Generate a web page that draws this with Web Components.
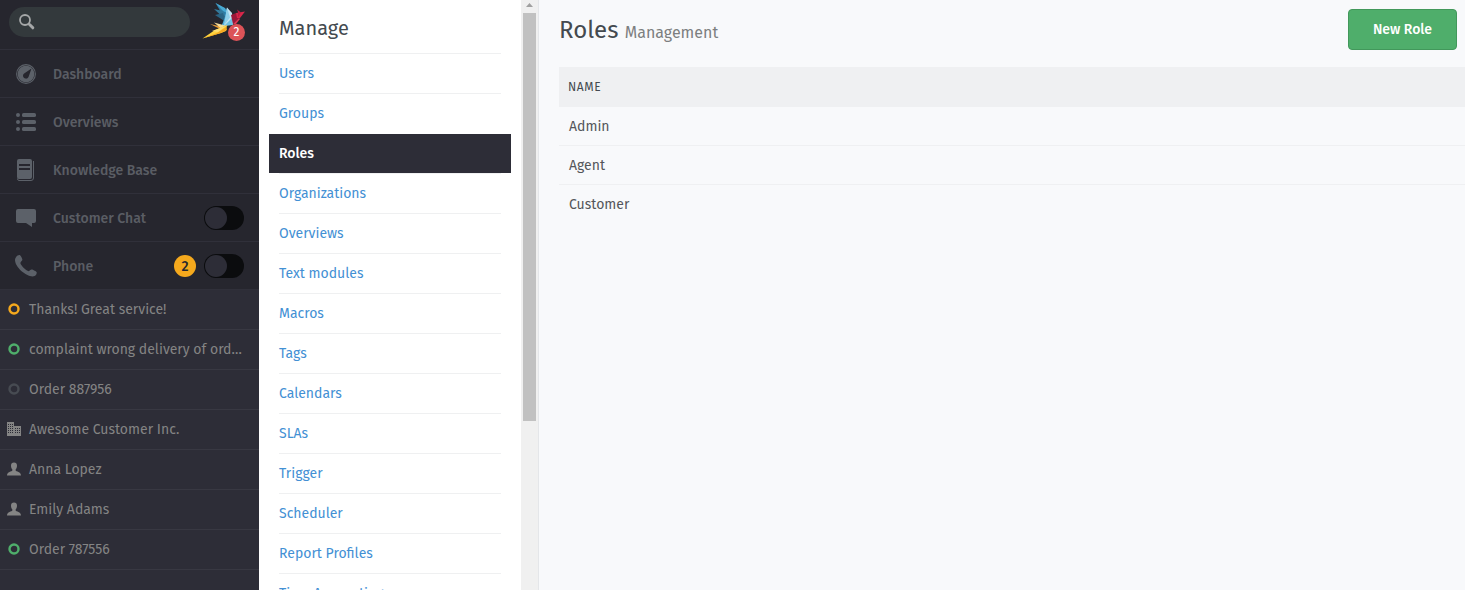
<!DOCTYPE html>
<html lang="en">
<head>
<meta charset="utf-8">
<title>Roles</title>
<style>
html,body{margin:0;height:100%;overflow:hidden}
body{font-family:"Fira Sans","Noto Sans",sans-serif;font-size:14px;background:#fff}
</style>
</head>
<body>
<help-desk></help-desk>
<script>
const define = (name, html, setup) => customElements.define(name, class extends HTMLElement {
  constructor() {
    super();
    this.attachShadow({mode: 'open'}).innerHTML = html;
  }
  connectedCallback() { if (setup) setup(this, this.shadowRoot); }
});

const icons = {
  dashboard: '<circle cx="12" cy="12" r="9.400" fill="none" stroke="currentColor" stroke-width="1.100"/><path fill="currentColor" fill-rule="evenodd" d="M12 3.700a8.300 8.300 0 1 0 .01 0zM17.500 6.500l-3 8.500a2.900 2.900 0 0 1-5.400-.5c-.3-1.500.3-2.400 1.400-3.200z"/>',
  list: '<g fill="currentColor"><circle cx="4" cy="5" r="2"/><circle cx="4" cy="12" r="2"/><circle cx="4" cy="19" r="2"/><rect x="8" y="3" width="14" height="4" rx="1.600"/><rect x="8" y="10" width="14" height="4" rx="1.600"/><rect x="8" y="17" width="14" height="4" rx="1.600"/></g>',
  book: '<path fill="currentColor" fill-rule="evenodd" d="M5 1h11q2 0 2 2v16q0 2-2 2H5q-2 0-2-2V3q0-2 2-2zM5 6v2h11V6zM5 10v2h11v-2z"/><path fill="none" stroke="currentColor" d="M19.500 3v17q0 2.500-2.500 2.500H5q-1.500 0-1.500-2"/>',
  chat: '<path fill="currentColor" d="M4 3h16q2 0 2 2v10q0 2-2 2h-2v4l-6-4H4q-2 0-2-2V5q0-2 2-2z"/>',
  phone: '<path fill="currentColor" d="M2.300 2.700C3 1.600 4.500.8 5.800 1c.7.1 2.600 3.700 2.600 4.800 0 1.200-2.300 2.200-2 3.500.6 2.400 5.200 7 7.700 7.800 1.200.4 2.300-1.700 3.600-1.600 1.200.1 4.900 2 5 2.800.2 1.500-.8 3-2.100 3.700C14.800 24.600 1 14 1 6c0-1.200.6-2.300 1.300-3.300z"/>',
};
const wrap = p => `<svg width="24" height="24" viewBox="0 0 24 24">${p}</svg>`;

define('nav-item', `<style>
:host{display:flex;align-items:center;box-sizing:border-box;height:48px;padding:0 15px 0 14px;border-bottom:1px solid #30303a;background:#26262e;color:#5a5d64;font-weight:500}
svg{display:block;color:#5c6169}
.label{margin-left:15px;flex:1;line-height:24px;padding-top:2px}
</style><span class="icon"></span><span class="label"><slot></slot></span><slot name="end"></slot>`, (el, root) => {
  root.querySelector('.icon').innerHTML = wrap(icons[el.getAttribute('icon')]);
});

define('toggle-switch', `<style>
:host{display:block;box-sizing:border-box;width:40px;height:24px;border-radius:12px;background:#0b0c0e;padding:1px;margin-left:8px}
i{display:block;width:22px;height:22px;border-radius:50%;background:#2d2d37}
</style><i></i>`);

define('count-badge', `<style>
:host{display:block;width:22px;height:22px;line-height:23px;border-radius:50%;background:#f5a91d;color:#26262e;text-align:center;font-size:14px}
</style><slot></slot>`);

const marks = {
  org: '<path fill="#848484" d="M0 0h7v4h7v10H0z"/><g fill="#2d2d37">' +
    [2,4,6,8,10].flatMap(y => [1,3,5,8,10,12].filter(x => x < 7 || y > 4).map(x => `<rect x="${x}" y="${y}" width="1" height="1"/>`)).join('') + '</g>',
  user: '<path fill="#848484" d="M7 .5c1.900 0 3 1.100 3 3.200 0 1.600-.5 2.800-1.300 3.500v1.500c.5.8 5.300 1 5.300 4.800H0c0-3.800 4.800-4 5.300-4.800V7.200C4.500 6.500 4 5.300 4 3.700 4 1.600 5.100.5 7 .5z"/>',
};
define('task-item', `<style>
:host{display:flex;align-items:center;box-sizing:border-box;height:40px;padding:0 0 1px 7px;border-bottom:1px solid #383842;color:#848484}
svg{display:block}.label{margin-left:8px;line-height:24px;padding-top:2px;white-space:nowrap}
</style><span class="icon"></span><span class="label"><slot></slot></span>`, (el, root) => {
  const m = el.getAttribute('mark');
  root.querySelector('.icon').innerHTML = `<svg width="14" height="14" viewBox="0 0 14 14">${marks[m] || `<circle cx="7" cy="7" r="4.500" fill="none" stroke="${m}" stroke-width="2.400"/>`}</svg>`;
});

define('search-box', `<style>
:host{display:flex;align-items:center;box-sizing:border-box;width:181px;height:30px;border-radius:15px;background:#33393c;padding-left:9px}
</style><svg width="18" height="18" viewBox="0 0 18 18" fill="none" stroke="#a5a7a8"><circle cx="7" cy="7" r="5" stroke-width="1.800"/><path d="M10.500 10.500l1.500 1.500" stroke-width="2"/><path d="M11.800 11.800l3 3" stroke-width="3" stroke-linecap="round"/></svg>`);

define('bird-logo', `<style>
:host{display:block;position:relative;width:45px;height:43px}
b{position:absolute;left:27px;top:24px;width:17px;height:17px;border-radius:50%;background:#dc5358;color:#fff;font-weight:400;font-size:12px;line-height:17px;text-align:center}
</style><svg width="45" height="43" viewBox="0 0 45 43">
<path fill="#2f7da5" d="M14.500 3L25 9l2 10-6-5z"/><path fill="#48a9d2" d="M14.500 3L24 8l2 5-4-2z"/>
<path fill="#337a9c" d="M13 9l9 2 3 9z"/><path fill="#2a6484" d="M14 15l8-2 3 9z"/>
<path fill="#4fb0dc" d="M26 7.500L24 17l-5 13 3-1 5-11z"/><path fill="#c5e5f2" d="M26 7.500L31 13l1 11-9 2 2-9z"/><path fill="#8fcfe9" d="M26 7.500l3 10-6 8z"/><path fill="#6fc0e2" d="M31 18l1 7-9 1z"/>
<path fill="#9c1739" d="M30 15l5-2 3 5-6 6z"/><path fill="#d7274a" d="M35 13l9-1.500-5 6.500-3 0z"/><path fill="#e03553" d="M32 24l6-6 1 1-4 5z"/><path fill="#bd1d42" d="M37 12l-1-2.500 4 3-3 5z"/>
<path fill="#e69b35" d="M9 24l13 3-3 2z"/><path fill="#f5dc98" d="M13 22.500l11 3-4 3z"/>
<path fill="#ffd33d" d="M1.500 38.500L14 30l12-5-1 6-5 2z"/><path fill="#f5a923" d="M1.500 38.500L16 33l9-6 1 3-6 3z"/><path fill="#ffdf73" d="M11 31l14-5-8 6z"/>
</svg><b>2</b>`);

define('side-bar', `<style>
:host{display:flex;flex-direction:column;width:259px;background:#2d2d37;overflow:hidden}
header{display:flex;box-sizing:border-box;height:50px;padding:0;background:#26262e;border-bottom:1px solid #30303a}
search-box{margin:7px 0 0 9px}bird-logo{margin-left:11px}
</style>
<header><search-box></search-box><bird-logo></bird-logo></header>
<nav-item icon="dashboard">Dashboard</nav-item>
<nav-item icon="list">Overviews</nav-item>
<nav-item icon="book">Knowledge Base</nav-item>
<nav-item icon="chat">Customer Chat<toggle-switch slot="end"></toggle-switch></nav-item>
<nav-item icon="phone">Phone<count-badge slot="end">2</count-badge><toggle-switch slot="end"></toggle-switch></nav-item>
<task-item mark="#f5a91d">Thanks! Great service!</task-item>
<task-item mark="#4fae6b">complaint wrong delivery of ord…</task-item>
<task-item mark="#474b52">Order 887956</task-item>
<task-item mark="org">Awesome Customer Inc.</task-item>
<task-item mark="user">Anna Lopez</task-item>
<task-item mark="user">Emily Adams</task-item>
<task-item mark="#4fae6b">Order 787556</task-item>`);

define('menu-link', `<style>
:host{display:block;box-sizing:border-box;height:40px;border-top:1px solid #eff0f1;line-height:40px;color:#4390d4}
:host([active]){margin:0 -10px;padding:0 10px;border-top-color:#fff;background:linear-gradient(#2d2d37,#2d2d37) no-repeat padding-box;color:#fff;font-weight:500}
</style><slot></slot>`);

const links = ['Users','Groups','Roles','Organizations','Overviews','Text modules','Macros','Tags','Calendars','SLAs','Trigger','Scheduler','Report Profiles','Time Accounting'];
define('manage-menu', `<style>
:host{display:flex;width:280px;background:#fff;overflow:hidden;box-sizing:border-box;border-right:1px solid #e4e6e9}
nav{width:222px;padding:0 20px}
h2{margin:0;height:53px;box-sizing:border-box;padding-top:2px;line-height:52px;font-size:20px;font-weight:400;color:#444a4f}
aside{width:17px;background:#f0f0f0;display:flex;flex-direction:column;align-items:center}
svg{display:block;height:13px}i{width:13px;height:408px;background:#c1c1c1}
</style><nav><h2>Manage</h2>${links.map(t => `<menu-link${t === 'Roles' ? ' active' : ''}>${t}</menu-link>`).join('')}</nav>
<aside><svg width="9" height="13" viewBox="0 0 9 13"><path fill="#a0a0a0" d="M1 7l3.500-4L8 7z"/></svg><i></i></aside>`);

define('primary-button', `<style>
:host{display:flex;align-items:center;justify-content:center;box-sizing:border-box;width:109px;height:41px;border:1px solid #42985b;border-radius:4px;background:#4fae6b;color:#fff;font-weight:500}
</style><slot></slot>`);

define('data-table', `<style>
:host{display:block;color:#54565a}
.head{height:40px;line-height:40px;padding-left:9px;background:#eff0f2;font-size:12px;letter-spacing:.6px;color:#444a4f}
.row{box-sizing:border-box;height:39px;line-height:39px;padding-left:10px;border-bottom:1px solid #eff0f2}
.row:last-child{border:0}
</style><div class="head">NAME</div>
<div class="row">Admin</div><div class="row">Agent</div><div class="row">Customer</div>`);

define('roles-page', `<style>
:host{display:block;flex:1;padding-left:20px;background:#f8f9fb}
header{display:flex;justify-content:space-between;height:67px;box-sizing:border-box;padding:9px 8px 0 0}
h1{margin:0;font-size:24px;font-weight:400;line-height:43px;color:#444a4f}
small{font-size:16px;color:#7d7f80}
</style><header><h1>Roles <small>Management</small></h1><primary-button>New Role</primary-button></header>
<data-table></data-table>`);

define('help-desk', `<style>:host{display:flex;height:590px}</style>
<side-bar></side-bar><manage-menu></manage-menu><roles-page></roles-page>`);
</script>
</body>
</html>
